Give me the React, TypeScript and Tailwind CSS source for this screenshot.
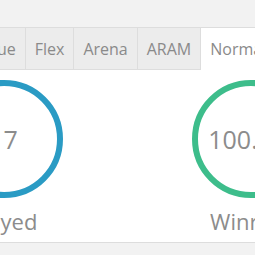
import React from "react";

const tabs = ["League", "Flex", "Arena", "ARAM", "Normal"];

function Stat({ value, label, color }: { value: string; label: string; color: string }) {
  return (
    <div className="w-[247px] shrink-0 flex flex-col items-center">
      <div
        className={`w-[118px] h-[118px] rounded-full border-[6px] ${color} flex items-center justify-center`}
      >
        <span className="text-[25px] leading-none text-[#8c8c8c]">{value}</span>
      </div>
      <div className="mt-[8px] text-[22px] leading-[30px] text-[#8c8c8c]">{label}</div>
    </div>
  );
}

export default function App() {
  return (
    <div
      className="w-[255px] h-[255px] overflow-hidden bg-[#f2f2f2]"
      style={{ fontFamily: "'Open Sans', sans-serif" }}
    >
      <div className="h-[27px]" />
      <div className="flex h-[43px] w-[600px] ml-[-47px] bg-[#ececec] border-t border-[#dddddd]">
        {tabs.map((t, i) => (
          <div
            key={t}
            className={
              i === tabs.length - 1
                ? "px-[9px] flex items-center text-[16px] text-[#8a8a8a] bg-white whitespace-nowrap"
                : "px-[9px] flex items-center text-[16px] text-[#8a8a8a] border-r border-b border-[#dddddd] whitespace-nowrap"
            }
          >
            {t}
          </div>
        ))}
        <div className="flex-1 border-b border-[#dddddd]" />
      </div>
      <div className="w-[255px] bg-white border-b border-[#dddddd] h-[173px] pt-[10px] overflow-hidden">
        <div className="flex ml-[-120px]">
          <Stat value="17" label="Played" color="border-[#2a9bc4]" />
          <Stat value="100.0%" label="Winrate" color="border-[#3dbd8b]" />
        </div>
      </div>
    </div>
  );
}
